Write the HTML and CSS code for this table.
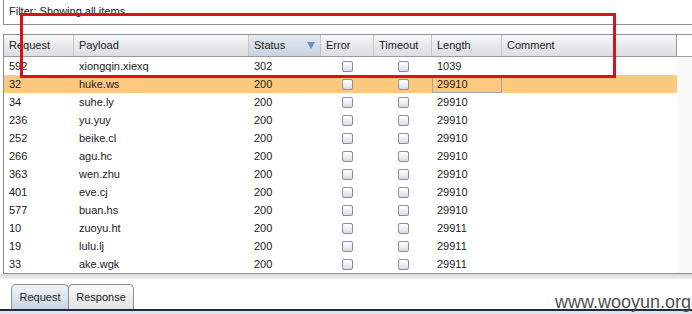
FILE: index.html
```html
<!DOCTYPE html>
<html>
<head>
<meta charset="utf-8">
<link rel="stylesheet" href="styles.css">
</head>
<body>
<div class="page">
  <div class="filter">Filter: Showing all items</div>

  <div class="results">
    <div class="row head">
      <div class="hc">Request</div>
      <div class="hc">Payload</div>
      <div class="hc sorted">Status<span class="arrow"></span></div>
      <div class="hc">Error</div>
      <div class="hc">Timeout</div>
      <div class="hc">Length</div>
      <div class="hc">Comment</div>
      <div class="fill"></div>
    </div>

    <div class="row">
      <div class="c">592</div><div class="c">xiongqin.xiexq</div><div class="c">302</div>
      <div class="c cb"><span class="box"></span></div><div class="c cb"><span class="box"></span></div>
      <div class="c">1039</div><div class="c"></div><div class="fill"></div>
    </div>
    <div class="row sel">
      <div class="c">32</div><div class="c">huke.ws</div><div class="c">200</div>
      <div class="c cb"><span class="box"></span></div><div class="c cb"><span class="box"></span></div>
      <div class="c focus">29910</div><div class="c"></div><div class="fill"></div>
    </div>
    <div class="row">
      <div class="c">34</div><div class="c">suhe.ly</div><div class="c">200</div>
      <div class="c cb"><span class="box"></span></div><div class="c cb"><span class="box"></span></div>
      <div class="c">29910</div><div class="c"></div><div class="fill"></div>
    </div>
    <div class="row">
      <div class="c">236</div><div class="c">yu.yuy</div><div class="c">200</div>
      <div class="c cb"><span class="box"></span></div><div class="c cb"><span class="box"></span></div>
      <div class="c">29910</div><div class="c"></div><div class="fill"></div>
    </div>
    <div class="row">
      <div class="c">252</div><div class="c">beike.cl</div><div class="c">200</div>
      <div class="c cb"><span class="box"></span></div><div class="c cb"><span class="box"></span></div>
      <div class="c">29910</div><div class="c"></div><div class="fill"></div>
    </div>
    <div class="row">
      <div class="c">266</div><div class="c">agu.hc</div><div class="c">200</div>
      <div class="c cb"><span class="box"></span></div><div class="c cb"><span class="box"></span></div>
      <div class="c">29910</div><div class="c"></div><div class="fill"></div>
    </div>
    <div class="row">
      <div class="c">363</div><div class="c">wen.zhu</div><div class="c">200</div>
      <div class="c cb"><span class="box"></span></div><div class="c cb"><span class="box"></span></div>
      <div class="c">29910</div><div class="c"></div><div class="fill"></div>
    </div>
    <div class="row">
      <div class="c">401</div><div class="c">eve.cj</div><div class="c">200</div>
      <div class="c cb"><span class="box"></span></div><div class="c cb"><span class="box"></span></div>
      <div class="c">29910</div><div class="c"></div><div class="fill"></div>
    </div>
    <div class="row">
      <div class="c">577</div><div class="c">buan.hs</div><div class="c">200</div>
      <div class="c cb"><span class="box"></span></div><div class="c cb"><span class="box"></span></div>
      <div class="c">29910</div><div class="c"></div><div class="fill"></div>
    </div>
    <div class="row">
      <div class="c">10</div><div class="c">zuoyu.ht</div><div class="c">200</div>
      <div class="c cb"><span class="box"></span></div><div class="c cb"><span class="box"></span></div>
      <div class="c">29911</div><div class="c"></div><div class="fill"></div>
    </div>
    <div class="row">
      <div class="c">19</div><div class="c">lulu.lj</div><div class="c">200</div>
      <div class="c cb"><span class="box"></span></div><div class="c cb"><span class="box"></span></div>
      <div class="c">29911</div><div class="c"></div><div class="fill"></div>
    </div>
    <div class="row">
      <div class="c">33</div><div class="c">ake.wgk</div><div class="c">200</div>
      <div class="c cb"><span class="box"></span></div><div class="c cb"><span class="box"></span></div>
      <div class="c">29911</div><div class="c"></div><div class="fill"></div>
    </div>
  </div>

  <div class="band"></div>

  <div class="tabs">
    <div class="tab active">Request</div>
    <div class="tab">Response</div>
  </div>
  <div class="tabline"></div>
  <div class="tabbase"></div>

  <div class="mark"></div>
  <div class="watermark">www.wooyun.org</div>
</div>
</body>
</html>
```

FILE: styles.css
```css
* { box-sizing: border-box; }
html, body { margin: 0; padding: 0; background: #fff; }
body {
  font-family: "Liberation Sans", Arial, sans-serif;
  font-size: 11px;
  color: #1c1c1c;
}
.page {
  position: relative;
  width: 692px;
  height: 314px;
  overflow: hidden;
  background: #fff;
}
.filter {
  margin-left: 3px;
  height: 25px;
  border-left: 1px solid #8f8f8f;
  border-bottom: 1px solid #8f8f8f;
  padding: 5px 0 0 5px;
  line-height: 13px;
}
.results {
  margin-top: 9px;
  margin-left: 3px;
  border-left: 1px solid #8f8f8f;
  border-top: 1px solid #8f8f8f;
  border-bottom: 1px solid #8f8f8f;
}
.row {
  display: grid;
  grid-template-columns: 70px 175px 72px 53px 58px 70px 175px 1fr;
  height: 18px;
  line-height: 18px;
}
.row.head {
  height: 22px;
  line-height: 21px;
  border-bottom: 1px solid #9a9a9a;
}
.hc {
  padding-left: 5px;
  border-right: 1px solid #c3c6cb;
  background: linear-gradient(#f7f8f9, #e6e8eb 55%, #dcdee2);
  white-space: nowrap;
}
.hc:nth-child(7) { border-right-color: #9a9a9a; }
.hc.sorted {
  display: flex;
  justify-content: space-between;
  align-items: center;
  padding-right: 5px;
  background: linear-gradient(#e4ebf2, #d3dde8 55%, #c7d3e0);
}
.arrow {
  width: 0;
  height: 0;
  border-left: 4px solid transparent;
  border-right: 4px solid transparent;
  border-top: 7px solid #6f8fb5;
}
.row.head .fill { background: #fff; }
.fill { background: #f9f9f9; }
.c {
  padding-left: 5px;
  white-space: nowrap;
}
.row.sel .c { background: #fdc97f; }
.c.focus {
  border: 1px solid #a3a3a3;
  padding-left: 4px;
  line-height: 16px;
}
.cb {
  display: flex;
  justify-content: center;
  align-items: center;
  padding-left: 0;
}
.box {
  width: 11px;
  height: 11px;
  border: 1px solid #8b9098;
  border-radius: 2px;
  background: linear-gradient(#ffffff, #e9ecf0 60%, #d6dae0);
}
.band {
  height: 5px;
  background: linear-gradient(#d9d9d9, #eeeeee);
}
.tabs {
  display: flex;
  margin-top: 5px;
  padding-left: 11px;
  height: 25px;
}
.tab {
  height: 25px;
  line-height: 24px;
  text-align: center;
  border: 1px solid #8e8e8e;
  border-bottom: none;
  border-radius: 5px 5px 0 0;
  background: linear-gradient(#fafafa, #e4e4e4);
  width: 66px;
  margin-left: -1px;
}
.tab.active {
  width: 58px;
  margin-left: 0;
  background: linear-gradient(#f1f4f7, #d9e2ec 60%, #c6d3e1);
  position: relative;
  z-index: 1;
}
.tabline {
  height: 2px;
  background: #1d2b3e;
}
.tabbase {
  height: 3px;
  background: #dde4ec;
}
.mark {
  position: absolute;
  left: 20px;
  top: 13px;
  width: 596px;
  height: 65px;
  border: 3px solid #d7141c;
  z-index: 5;
}
.watermark {
  position: absolute;
  right: 1px;
  top: 293px;
  font-size: 18px;
  line-height: 18px;
  color: #4f4f4f;
  z-index: 6;
}
```
